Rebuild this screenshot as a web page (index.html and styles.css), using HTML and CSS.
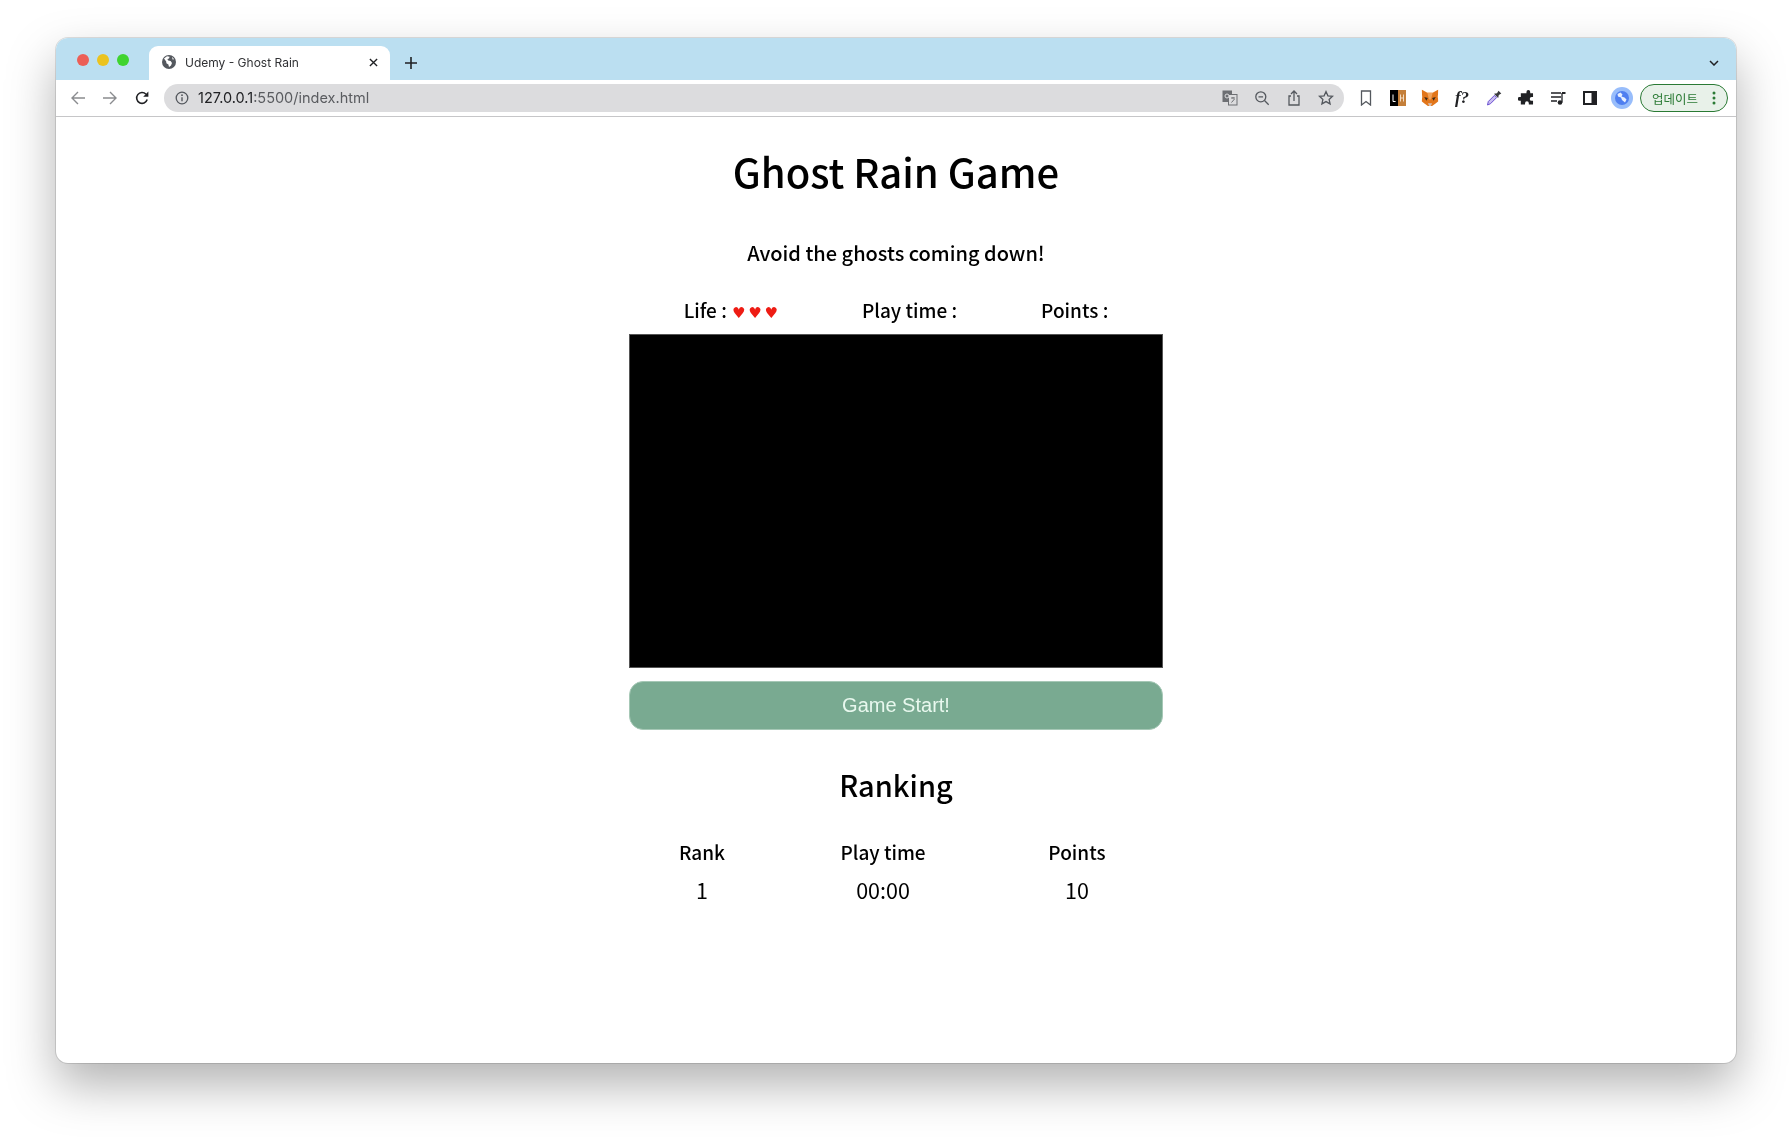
FILE: index.html
```html
<!DOCTYPE html>
<html lang="en">
  <head>
    <meta charset="UTF-8" />
    <meta name="viewport" content="width=device-width, initial-scale=1.0" />
    <title>Udemy - Ghost Rain</title>
    <link rel="stylesheet" href="styles.css">
  </head>
  <body>
    <div class="window">
      <div class="tab-strip">
        <div class="traffic-lights">
          <span class="light light-red"></span>
          <span class="light light-yellow"></span>
          <span class="light light-green"></span>
        </div>
        <div class="tab">
          <svg class="tab-favicon" viewBox="0 0 14 14">
            <circle cx="7" cy="7" r="7" fill="#54585e"/>
            <path d="M2 3.5l3-2.2 2.6.4-.6 1.8-1.6.5.8 1.6 2.4.3 1.4 2-1 2.6-2 1.6-.6-2.6-2-1.2-.2-1.8z" fill="#fff"/>
            <path d="M10 1.8l2.2 2.4-1.6.4z" fill="#fff"/>
          </svg>
          <span class="tab-title">Udemy - Ghost Rain</span>
          <svg class="tab-close" viewBox="0 0 10 10">
            <path d="M1 1l8 8M9 1l-8 8" stroke="#202124" stroke-width="1.5" fill="none"/>
          </svg>
        </div>
        <svg class="new-tab" viewBox="0 0 12 12">
          <path d="M6 0v12M0 6h12" stroke="#202124" stroke-width="1.6" fill="none"/>
        </svg>
        <svg class="tab-menu" viewBox="0 0 10 6">
          <path d="M1 1l4 4 4-4" stroke="#202124" stroke-width="1.5" fill="none"/>
        </svg>
      </div>

      <div class="toolbar">
        <div class="nav-buttons">
          <svg class="nav-icon" viewBox="0 0 14 14">
            <path d="M14 7H1.5M7 1L1 7l6 6" stroke="#8a8c8f" stroke-width="1.4" fill="none"/>
          </svg>
          <svg class="nav-icon" viewBox="0 0 14 14">
            <path d="M0 7h12.5M7 1l6 6-6 6" stroke="#8a8c8f" stroke-width="1.4" fill="none"/>
          </svg>
          <svg class="nav-icon" viewBox="0 0 14 14">
            <path d="M12.2 8.6A5.4 5.4 0 1 1 11 3.2" stroke="#202124" stroke-width="1.6" fill="none"/>
            <path d="M13.4.6v5.2H8.2z" fill="#202124"/>
          </svg>
        </div>
        <div class="address-bar">
          <svg class="info-icon" viewBox="0 0 14 14">
            <circle cx="7" cy="7" r="5.8" stroke="#54585e" stroke-width="1.3" fill="none"/>
            <path d="M7 6.2v4" stroke="#54585e" stroke-width="1.4"/>
            <circle cx="7" cy="4.2" r=".9" fill="#54585e"/>
          </svg>
          <span class="url"><span class="url-host">127.0.0.1</span>:5500/index.html</span>
          <div class="address-actions">
            <svg class="bar-icon" viewBox="0 0 16 16">
              <rect x="1" y="1" width="8.5" height="10.5" fill="#6d6f73" stroke="#6d6f73"/>
              <rect x="6.5" y="4.5" width="8.5" height="10.5" fill="#dcdcde" stroke="#6d6f73"/>
              <circle cx="5" cy="6" r="2" stroke="#dcdcde" fill="none"/>
              <path d="M9 8h4M11 7v1.5M9.5 12.5L12.5 9" stroke="#6d6f73" fill="none"/>
            </svg>
            <svg class="bar-icon" viewBox="0 0 16 16">
              <circle cx="6.8" cy="6.8" r="5" stroke="#54585e" stroke-width="1.3" fill="none"/>
              <path d="M4.5 6.8h4.6M10.5 10.5l4.2 4.2" stroke="#54585e" stroke-width="1.3" fill="none"/>
            </svg>
            <svg class="bar-icon" viewBox="0 0 16 16">
              <path d="M5 6H3v9h10V6h-2" stroke="#54585e" stroke-width="1.3" fill="none"/>
              <path d="M8 11V1.5M5 4l3-3 3 3" stroke="#54585e" stroke-width="1.3" fill="none"/>
            </svg>
            <svg class="bar-icon" viewBox="0 0 16 16">
              <path d="M8 1.6l1.9 4.2 4.6.5-3.4 3.1 1 4.5L8 11.6l-4.1 2.3 1-4.5-3.4-3.1 4.6-.5z" stroke="#54585e" stroke-width="1.3" fill="none"/>
            </svg>
          </div>
        </div>
        <div class="extensions">
          <svg class="ext-icon" viewBox="0 0 16 16">
            <path d="M3.5 1h9v14L8 11.5 3.5 15z" stroke="#54585e" stroke-width="1.3" fill="none"/>
          </svg>
          <svg class="ext-icon" viewBox="0 0 16 16">
            <rect width="8" height="16" y="0" fill="#000"/>
            <rect x="8" width="8" height="16" fill="#c47f3a"/>
            <path d="M3 4.5v7h2.6" stroke="#fff" stroke-width="1" fill="none"/>
            <path d="M10.5 4.5v7M13.5 4.5v7M10.5 8h3" stroke="#f3dcc2" stroke-width="1" fill="none"/>
          </svg>
          <svg class="ext-icon fox" viewBox="0 0 16 16">
            <path d="M0 0l5.5 3h5L16 0l-.6 7 .6 4-3 2.500-3 2H6l-3-2-3-2.500.6-4z" fill="#e2761b"/>
            <path d="M2.500 7l3.500 1-1.500 2.500zM13.500 7l-3.500 1 1.500 2.500z" fill="#3d2a1a"/>
            <path d="M6 13h4l-1.200 2.500H7.200z" fill="#d7c1b3"/>
            <path d="M5.500 3h5L9 9.500H7z" fill="#f0a35c"/>
          </svg>
          <span class="ext-icon font-ninja">f?</span>
          <svg class="ext-icon" viewBox="0 0 16 16">
            <path d="M1.500 15l.8-3.500 6.200-6.200 2.200 2.200-6.200 6.200z" fill="#c9bdf0" stroke="#6a4fd0" stroke-width="1"/>
            <path d="M8 3.800l3-.6 1.500-2.500 2.800 2.800-2.500 1.500-.6 3z" fill="#3a3b3e"/>
          </svg>
          <svg class="ext-icon" viewBox="0 0 16 16">
            <path d="M6 3h3V1.500a2 2 0 0 1 4 0V3h3v4h-1.500a2 2 0 0 0 0 4H16v4H11.500v-1.500a2 2 0 0 0-4 0V15H3v-4H1.500a2 2 0 0 1 0-4H3V3z" fill="#202124" transform="translate(0 .5) scale(.94)"/>
          </svg>
          <svg class="ext-icon" viewBox="0 0 16 16">
            <path d="M1 3h10M1 7h10M1 11h6" stroke="#202124" stroke-width="1.300" fill="none"/>
            <path d="M12 3v9.500" stroke="#202124" stroke-width="1.300" fill="none"/>
            <path d="M12 2h3.500v2H12z" fill="#202124"/>
            <circle cx="10" cy="12.500" r="2.300" fill="#202124"/>
          </svg>
          <svg class="ext-icon" viewBox="0 0 16 16">
            <rect x="1" y="1" width="14" height="14" fill="#202124"/>
            <rect x="3" y="3" width="6.500" height="10" fill="#fff"/>
          </svg>
          <svg class="avatar" viewBox="0 0 22 22">
            <circle cx="11" cy="11" r="11" fill="#98bdfb"/>
            <circle cx="11" cy="11" r="7" fill="#4f7ff0"/>
            <path d="M6.500 7l3-1.500 2 2-1 2 3 1 2 2-1.500 3-3-2.500-1-2.500-3-1z" fill="#e8f0fe"/>
          </svg>
          <div class="update-pill">
            <span class="update-label">업데이트</span>
            <svg class="update-dots" viewBox="0 0 4 14">
              <circle cx="2" cy="2" r="1.500" fill="#2a7a34"/>
              <circle cx="2" cy="7" r="1.500" fill="#2a7a34"/>
              <circle cx="2" cy="12" r="1.500" fill="#2a7a34"/>
            </svg>
          </div>
        </div>
      </div>

      <main class="page">
        <h1>Ghost Rain Game</h1>
        <p class="intro">Avoid the ghosts coming down!</p>
        <div class="status">
          <span>Life : <span class="hearts">♥ ♥ ♥</span></span>
          <span>Play time :</span>
          <span>Points :</span>
        </div>
        <div class="game-area"></div>
        <button class="start-btn" type="button">Game Start!</button>
        <h2>Ranking</h2>
        <table class="ranking">
          <thead>
            <tr>
              <th class="col-rank">Rank</th>
              <th class="col-time">Play time</th>
              <th class="col-points">Points</th>
            </tr>
          </thead>
          <tbody>
            <tr>
              <td>1</td>
              <td>00:00</td>
              <td>10</td>
            </tr>
          </tbody>
        </table>
      </main>
    </div>
  </body>
</html>
```

FILE: styles.css
```css
html,
body {
  margin: 0;
  padding: 0;
  height: 100%;
  overflow: hidden;
  background: #fff;
}

body {
  box-sizing: border-box;
  padding: 38px 56px 74px;
  font-family: "Noto Sans CJK KR", "Noto Sans", sans-serif;
}

.window {
  height: 1025px;
  display: flex;
  flex-direction: column;
  background: #fff;
  border-radius: 12px;
  overflow: hidden;
  box-shadow: 0 0 0 1px rgba(0, 0, 0, 0.12);
  filter: drop-shadow(0 22px 24px rgba(0, 0, 0, 0.3));
}

/* tab strip */
.tab-strip {
  height: 42px;
  flex: none;
  display: flex;
  align-items: flex-end;
  background: #bbdff1;
}

.traffic-lights {
  display: flex;
  gap: 8px;
  align-self: flex-start;
  margin: 16px 0 0 21px;
}

.light {
  width: 12px;
  height: 12px;
  border-radius: 50%;
}

.light-red {
  background: #ec5f57;
}

.light-yellow {
  background: #ebc31f;
}

.light-green {
  background: #3fd42f;
}

.tab {
  width: 241px;
  height: 34px;
  box-sizing: border-box;
  margin-left: 20px;
  padding: 0 12px 2px 13px;
  display: flex;
  align-items: center;
  background: #fff;
  border-radius: 9px 9px 0 0;
}

.tab-favicon {
  width: 14px;
  height: 14px;
  flex: none;
}

.tab-title {
  flex: 1;
  margin-left: 9px;
  font-family: "Inter", "Liberation Sans", sans-serif;
  font-size: 12px;
  color: #303134;
}

.tab-close {
  width: 9px;
  height: 9px;
  flex: none;
}

.new-tab {
  width: 12px;
  height: 12px;
  flex: none;
  margin: 0 0 11px 15px;
}

.tab-menu {
  width: 10px;
  height: 6px;
  flex: none;
  margin: 0 17px 14px auto;
}

/* toolbar */
.toolbar {
  height: 36px;
  flex: none;
  box-sizing: content-box;
  display: flex;
  align-items: center;
  border-bottom: 1px solid #c6c6c8;
  background: #fff;
}

.nav-buttons {
  width: 108px;
  box-sizing: border-box;
  padding-left: 15px;
  display: flex;
  gap: 18px;
}

.nav-icon {
  width: 14px;
  height: 14px;
}

.address-bar {
  width: 1180px;
  height: 28px;
  flex: none;
  box-sizing: border-box;
  padding: 0 10px 0 11px;
  display: flex;
  align-items: center;
  background: #dcdcde;
  border-radius: 14px;
}

.info-icon {
  width: 14px;
  height: 14px;
  flex: none;
}

.url {
  flex: 1;
  margin-left: 9px;
  padding-bottom: 1px;
  font-family: "Inter", "Liberation Sans", sans-serif;
  font-size: 14.5px;
  color: #5a5c60;
}

.url-host {
  color: #202124;
}

.address-actions {
  display: flex;
  gap: 16px;
}

.bar-icon {
  width: 16px;
  height: 16px;
}

.extensions {
  margin-left: 14px;
  display: flex;
  align-items: center;
  gap: 16px;
}

.ext-icon {
  width: 16px;
  height: 16px;
  flex: none;
}

.fox {
  transform: scale(1.05);
}

.font-ninja {
  line-height: 16px;
  text-align: center;
  font-family: "Liberation Serif", serif;
  font-style: italic;
  font-weight: 700;
  font-size: 17px;
  color: #202124;
}

.avatar {
  width: 22px;
  height: 22px;
  flex: none;
  margin: 0 -3px;
}

.update-pill {
  width: 88px;
  height: 28px;
  box-sizing: border-box;
  margin-left: -6px;
  padding: 0 11px;
  display: flex;
  align-items: center;
  justify-content: space-between;
  background: #e8f1e9;
  border: 1px solid #2a7a34;
  border-radius: 14px;
}

.update-label {
  font-size: 12.5px;
  color: #2a7a34;
}

.update-dots {
  width: 4px;
  height: 14px;
}

/* page */
.page {
  flex: 1;
  display: flex;
  flex-direction: column;
  align-items: center;
  color: #000;
}

h1 {
  margin: 25px 0 0;
  font-size: 40px;
  line-height: 58px;
  font-weight: 500;
}

.intro {
  margin: 38px 0 0;
  font-size: 20px;
  line-height: 30px;
  font-weight: 500;
}

.status {
  margin-top: 27px;
  display: flex;
  gap: 84px;
  font-size: 19px;
  line-height: 30px;
  font-weight: 500;
}

.hearts {
  font-family: "DejaVu Sans", sans-serif;
  font-size: 15px;
  word-spacing: -2px;
  margin-left: 1px;
  color: #ee1c14;
}

.game-area {
  width: 534px;
  height: 334px;
  box-sizing: border-box;
  margin-top: 6px;
  background: #000;
  border: 1px solid #555;
}

.start-btn {
  width: 534px;
  height: 49px;
  margin-top: 13px;
  padding: 0;
  background: #79aa91;
  border: 1px solid #a6c8b6;
  border-radius: 14px;
  font-family: "Liberation Sans", sans-serif;
  font-size: 20px;
  color: #e8f8ee;
}

h2 {
  margin: 32px 0 0;
  font-size: 29px;
  line-height: 44px;
  font-weight: 500;
}

.ranking {
  width: 534px;
  margin-top: 27px;
  border-collapse: collapse;
  table-layout: fixed;
  font-size: 19px;
}

.ranking th {
  height: 37px;
  padding: 0;
  font-weight: 500;
}

.ranking td {
  height: 38px;
  padding: 0;
  text-align: center;
  font-size: 21.5px;
  font-weight: 400;
}

.col-rank {
  width: 146px;
}

.col-time {
  width: 216px;
}

.col-points {
  width: 172px;
}
```
